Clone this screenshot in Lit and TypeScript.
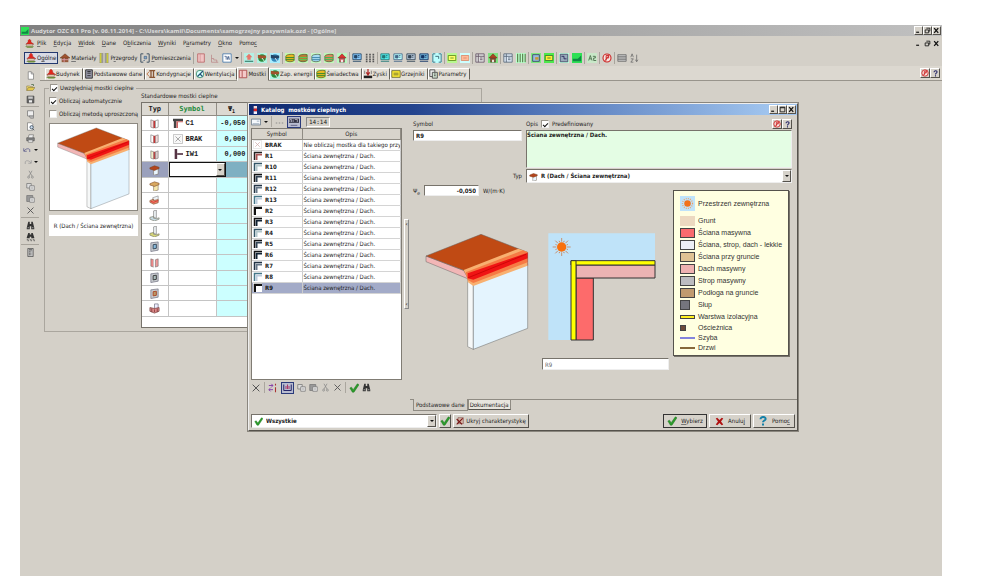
import { LitElement, html, svg, css, nothing } from "lit";
import { customElement, property } from "lit/decorators.js";
import { classMap } from "lit/directives/class-map.js";

const house = (wall: string, roof: string) => svg`
  <path d="M3 6h6v5H3z" fill="${wall}" stroke="#444" stroke-width=".6"/>
  <path d="M1 6 6 1l5 5z" fill="${roof}" stroke="#621" stroke-width=".5"/>
  <path d="M5 8h2v3H5z" fill="#fff"/>`;
const screen = (frame: string, fill: string) => svg`
  <path d="M1 1h10v7H1z" fill="${fill}" stroke="${frame}"/>
  <path d="M3 3h3v3H3zM7 3h2M7 5h2M1 10h10" fill="${frame}" stroke="${frame}"/>`;
const sheet = (frame: string, fill: string) => svg`
  <path d="M1 1h10v10H1z" fill="${fill}" stroke="${frame}"/>
  <path d="M1 4h10M4 1v10M6 6h3M6 8h3" stroke="${frame}" fill="none"/>`;
const drum = (bg: string, a: string, b: string) => svg`
  <path d="M0 0h12v12H0z" fill="${bg}"/>
  <path d="M1 4c0-2 6-3 10-2v7c-2 2-8 2-10 0z" fill="${a}" stroke="#453" stroke-width=".8"/>
  <path d="M1 5.500h10M1 8h10" stroke="${b}" stroke-width="1.200"/>`;
const plate = (frame: string, fill: string, bg: string) => svg`
  <path d="M0 0h12v12H0z" fill="${bg}"/><path d="M1.500 3h9v6h-9z" fill="${fill}" stroke="${frame}"/>
  <path d="M4 6h4" stroke="${frame}"/>`;
const globe = (a: string, b: string, bg: string) => svg`
  <path d="M0 0h12v12H0z" fill="${bg}"/><circle cx="6" cy="6" r="4.500" fill="${a}"/>
  <path d="M1 2l5 1 5 0v3L6 7 1 6z" fill="${b}"/><path d="M6 6l3 4" stroke="#fff"/>`;
const panel = (l: string, m: string, r: string) => svg`
  <path d="M2 2l3 1v8l-3-1z" fill="${l}" stroke="#666" stroke-width=".6"/>
  <path d="M5 3h2v8H5z" fill="${m}"/><path d="M7 3l3-1v8l-3 1z" fill="${r}" stroke="#666" stroke-width=".6"/>`;
const corner = (outer: string, inner: string) => svg`
  <path d="M1 12V1h11v2H3v9z" fill="${outer}"/>
  <path d="M3.500 12V3.500H12v2.500H6v6z" fill="${inner}"/>`;
const slab = (top: string, side: string) => svg`
  <path d="M5 6l5-1.500V11L6 12l-1-.5z" fill="${side}" stroke="#765" stroke-width=".6"/>
  <path d="M1 4l5-2 5 1.500V5L6 7 1 5.500z" fill="${top}" stroke="#742" stroke-width=".6"/>`;
const base = (foot: string) => svg`
  <path d="M5 1l3-1v9l-3-1z" fill="#eef3f5" stroke="#777" stroke-width=".7"/>
  <path d="M1 8l4-1v2l3 .5 3-1v1.500L6 12 1 10z" fill="${foot}" stroke="#776" stroke-width=".7"/>`;
const opening = (frame: string, fill: string) => svg`
  <path d="M2 2l8-1v9l-8 1.500z" fill="#c8ccd0" stroke="#667" stroke-width=".7"/>
  <path d="M4.500 4l3.500-.5V8l-3.500.6z" fill="${fill}" stroke="${frame}"/>`;

const ICONS: Record<string, unknown> = {
  app: svg`<path d="M6 0l2 2v2l4 3H1l3-3V2z" fill="#e0281e" stroke="#822" stroke-width=".4"/><path d="M2 7h8v2H2z" fill="#f4e0c8" stroke="#643" stroke-width=".5"/><path d="M0 9.500h12l-2 2H3z" fill="#6b8a3a"/>`,
  brick: svg`<path d="M2 6h8v5H2z" fill="#965a3c"/><path d="M0 6 6 1l6 5z" fill="#a0522d" stroke="#532" stroke-width=".5"/><path d="M2 8h8M5 6v5" stroke="#d9a"/>`,
  walls: svg`<path d="M1 0h2v12H1zM9 0h2v12H9z" fill="#d9d832" stroke="#776" stroke-width=".5"/><path d="M4.500 0v12M7.500 0v12" stroke="#777"/>`,
  room: svg`<path d="M4 1H1v10h3M8 1h3v10H8" fill="none" stroke="#456" stroke-width="1.200"/><path d="M5 4h3v3H5zM4 9h2" fill="#8ac" stroke="#357" stroke-width=".7"/>`,
  roomCyan: svg`<path d="M0 0h12v12H0z" fill="#bff"/><path d="M4 1H1v10h3M8 1h3v10H8M4 4h4v3" fill="none" stroke="#356"/>`,
  door: svg`<path d="M2 1h8v10H2z" fill="#f0c4c4" stroke="#b66"/><path d="M5 1v10" stroke="#c88" stroke-width=".7"/>`,
  chart: svg`<path d="M2 1v10h9M2 6h3v2h4v3" stroke="#b88" fill="none"/>`,
  word: svg`<path d="M1 1h10v10H1z" fill="#fff" stroke="#47a"/><path d="M3 4h2v4M6 4l1 4 1-4 1 4" stroke="#247" fill="none" stroke-width=".8"/>`,
  houseTeal: svg`<path d="M0 0h12v12H0z" fill="#b4f0e4"/><path d="M6 1l4 4H8v3H4V5H2z" fill="#e8756a"/><path d="M1 10h10" stroke="#487" stroke-width="1.500"/>`,
  globeGreen: globe("#2a8a3a", "#a0522d", "#b0f4e4"),
  globeBlue: globe("#38b", "#246", "#aef"),
  drumA: drum("#c8f8b0", "#e8b820", "#3a8a2a"), drumB: drum("#c0f8b8", "#b97b35", "#5c5"), drumC: drum("#c8f8c8", "#a8dcf4", "#48a"), drumD: drum("#c0f8b8", "#d88a5a", "#3b5"),
  houseGreen: svg`<path d="M0 0h12v12H0z" fill="#b8f8c0"/>${house("#c66", "#d33")}`,
  houseBrown: svg`<path d="M0 0h12v12H0z" fill="#7fe07f"/>${house("#853", "#a42")}`,
  scrBlue: screen("#246", "#8cf"), scrTeal: screen("#277", "#5ee"), scrCyan: screen("#468", "#bff"), scrGrey: screen("#345", "#bcd"), scrDark: screen("#136", "#7bd"),
  bars: svg`<path d="M2 1v10M6 1v10M10 1v10" stroke="#555" stroke-width="2" stroke-dasharray="2 .8"/>`,
  plateY: plate("#5a8a1a", "#ff6", "#b8f890"), plateO: plate("#d88a6a", "#fb9", "#cff"), plateG: plate("#373", "#fe3", "#4ce84c"),
  table: sheet("#656", "#ddd"), tableBlue: sheet("#567", "#dde8f4"), tableGreen: svg`<path d="M0 0h12v12H0z" fill="#7fe87f"/><path d="M2 2h8v8H2z" fill="#9bd" stroke="#346"/><path d="M5 5h4v3H5z" fill="#c93"/>`,
  stripes: svg`<path d="M0 0h12v12H0z" fill="#bfc"/><path d="M2 1v10M5 1v10M8 1v10M11 1v10" stroke="#574" stroke-width="1.300"/>`,
  tableBrown: svg`<path d="M0 0h12v12H0z" fill="#bfd"/><path d="M1.500 1.500h9v9h-9z" fill="#9ab" stroke="#446"/><path d="M3 4h3v3h3" stroke="#225" fill="none"/>`,
  green: svg`<path d="M0 0h12v12H0z" fill="#2ee055"/><path d="M1 10h10V3L7 7H1z" fill="#184"/>`,
  letterA: svg`<path d="M0 0h12v12H0z" fill="#c8e8c8"/><path d="M2 9l2-6 2 6M3 7h2M7 4h3v2H8v3h3" fill="none" stroke="#464"/>`,
  info: svg`<circle cx="6" cy="6" r="4.800" fill="#f6e4e0" stroke="#c22" stroke-width="1.300"/><path d="M5 9V3h3v3H5M9 2 3 10" stroke="#c22" fill="none" stroke-width="1.100"/>`,
  grid: svg`<path d="M1 2h10v8H1zM1 4h10M1 6h10M1 8h10" fill="#ccc" stroke="#666" stroke-width=".9"/>`,
  sort: svg`<path d="M1 5l1.500-4L4 5M1 7h3l-3 4h3M8 2v8M6.500 8 8 10.500 9.500 8" fill="none" stroke="#666" stroke-width=".9"/>`,
  floors: svg`<path d="M4 2h7M4 10h7M6 2v8M9 2v8" stroke="#853" stroke-width="1.600"/><path d="M4 3 1 6l3 3" fill="none" stroke="#b63"/>`,
  fan: svg`<circle cx="6" cy="6" r="4.500" fill="#dff" stroke="#386"/><path d="M6 6l4-4M6 6 3 9M6 6l3 3" stroke="#257" stroke-width="1.400"/>`,
  cabinet: svg`<path d="M2 1h8v10H2z" fill="#99a" stroke="#222"/><path d="M4 3h4M4 5h4M4 8h4" stroke="#222"/>`,
  gain: svg`<path d="M1 8h10v3H1z" fill="#222"/><path d="M6 0v8M4 4l2 3 2-3" stroke="#a22" fill="none" stroke-width="1.400"/><path d="M2 2v4M10 2v4" stroke="#777"/>`,
  radiator: svg`<path d="M1 2h10v8H1z" fill="#fe3" stroke="#663"/><path d="M3 5h6M3 7h6" stroke="#663"/>`,
  params: svg`<path d="M1 1h6v8H1z" fill="#eee" stroke="#444"/><path d="M4 4h6v7H4z" fill="#cdc" stroke="#444"/><path d="M6 6h2M6 8h2" stroke="#444"/>`,
  bridge: svg`<path d="M1.500 1.500h9v9h-9z" fill="#f4caca" stroke="#a44"/><path d="M5 2v8" stroke="#a44"/>`,
  blank: svg`<path d="M3 1h4l3 3v7H3z" fill="#fff" stroke="#666" stroke-width=".8"/><path d="M7 1v3h3" fill="none" stroke="#666" stroke-width=".8"/>`,
  open: svg`<path d="M1 10V4h4l1 1h3v2" fill="#f4e27a" stroke="#874" stroke-width=".8"/><path d="M1 10l2-4h9l-3 4z" fill="#e4c84a" stroke="#874" stroke-width=".8"/><path d="M7 2h3v2" stroke="#464" fill="none"/>`,
  save: svg`<path d="M1.500 1.500h9v9h-9z" fill="#666" stroke="#444"/><path d="M3 2h6v3H3z" fill="#ccc"/><path d="M4 7h4v3H4z" fill="#eee"/>`,
  print: svg`<path d="M1 5h10v4H1z" fill="#888" stroke="#444" stroke-width=".8"/><path d="M4 1h6L9 5H3zM3 8h6v3H3z" fill="#eee" stroke="#555" stroke-width=".7"/>`,
  scroll: svg`<path d="M2 1h8v7H2z" fill="#eee" stroke="#777"/><path d="M4 8h6v3H6z" fill="#bbb" stroke="#666" stroke-width=".7"/>`,
  preview: svg`<path d="M2 1h5l2 2v8H2z" fill="#fff" stroke="#666" stroke-width=".8"/><circle cx="7.500" cy="7" r="2.200" fill="#cde" stroke="#345"/><path d="M9 9l2 2" stroke="#345"/>`,
  undo: svg`<path d="M1 3v4h4M1.500 6.500C4 3 8 3 9 5v3" fill="none" stroke="#558"/>`,
  redo: svg`<path d="M11 3v4H7M10.500 6.500C8 3 4 3 3 5v3" fill="none" stroke="#999"/>`,
  cut: svg`<path d="M4 1l4 7M8 1 4 8" stroke="#888"/><circle cx="3.500" cy="9.500" r="1.300" fill="none" stroke="#888"/><circle cx="8.500" cy="9.500" r="1.300" fill="none" stroke="#888"/>`,
  copy: svg`<path d="M1 2h6v6H1z" fill="#ddd" stroke="#777"/><path d="M5 5h6v6H5z" fill="#eee" stroke="#777"/><path d="M6.500 7h3M6.500 9h3" stroke="#888" stroke-width=".7"/>`,
  paste: svg`<path d="M1 2h8v8H1z" fill="#999" stroke="#777"/><path d="M5 5h6v6H5z" fill="#eee" stroke="#777"/><path d="M6.500 7h3M6.500 9h3" stroke="#888" stroke-width=".7"/>`,
  del: svg`<path d="M2 2l8 8M10 2 2 10" stroke="#555" stroke-width="1.200"/>`,
  find: svg`<path d="M3 1h2v3h2V1h2l2 8v2H7V7H5v4H1V9z" fill="#333"/><path d="M2 9h2M8 9h2" stroke="#bbb"/>`,
  findNext: svg`<path d="M3 0h2v2h2V0h2l2 6v1H7V5H5v2H1V6z" fill="#333"/><path d="M1 9h2v2M5 9h2v2M9 9h2v2" stroke="#444" fill="none"/>`,
  calc: svg`<path d="M2.500.5h7v11h-7z" fill="#ccc" stroke="#444"/><path d="M4 2.500h4M4 5h1M6 5h1M4 7h1M6 7h1M4 9h1M6 9h1" stroke="#333" stroke-width="1.200"/>`,
  wallA: panel("#f3d9d9", "#c33", "#fff"), wallB: panel("#fff", "#c33", "#f3d9d9"), wallC: panel("#eec", "#b44", "#dcc"),
  roofA: slab("#b4441c", "#eaf6ff"), roofB: slab("#d8a860", "#f6e8b0"),
  floor: svg`<path d="M4 3l6-2v6l-5 2z" fill="#eef4f8" stroke="#777" stroke-width=".6"/><path d="M1 6l4-1.500V6l5-1v3.500L5 10 1 8z" fill="#e8866a" stroke="#853" stroke-width=".7"/><path d="M2 7l3 1 5-2" stroke="#d33" fill="none"/>`,
  baseA: base("#c8dce4"), baseB: base("#d8d878"), winA: opening("#345", "#8bd"), winB: panel("#e88", "#fff", "#e99"), winC: opening("#333", "#abb"), winD: opening("#a42", "#b96"),
  balcony: svg`<path d="M6 1h4v7H6z" fill="#eef" stroke="#667" stroke-width=".7"/><path d="M1 5l5 1 5-1v4L6 11 1 9z" fill="#d88" stroke="#744" stroke-width=".8"/><path d="M3 6v4M6 7v3M9 6v4" stroke="#733" stroke-width=".8"/>`,
  c1: svg`<path d="M0 1h12v3H4v8H1V4H0z" fill="#444"/><path d="M4 4h8v1H6v7H4z" fill="#c66"/>`,
  iw: svg`<path d="M2 0h3v12H2z" fill="#534"/><path d="M5 5h7v2H5z" fill="#534"/>`,
  none: svg`<path d="M.5.5h11v11H.5z" fill="#f8f8f8" stroke="#bbb"/><path d="M3 3l6 6M9 3 3 9" stroke="#999"/>`,
  noneRed: svg`<path d="M.5.5h11v11H.5z" fill="#fff" stroke="#ddd"/><path d="M3 3l6 6M9 3 3 9" stroke="#caa"/>`,
  k1: corner("#222", "#a55"), k2: corner("#356", "#b4c8cc"), k3: corner("#111", "#345"), k4: corner("#234", "#678"), k5: corner("#478", "#bcd"), k7: corner("#111", "#123"),
  k6: svg`<path d="M1 12V1h11v3H4v8z" fill="#111"/>`,
  check: svg`<path d="M1 6l2-1 2 3 5-7 2 1-6 9H4z" fill="#2c9c2c" stroke="#176b17" stroke-width=".5"/>`,
  cross: svg`<path d="M1 2l2-1 3 3 3-3 2 1-3 4 3 4-2 1-3-3-3 3-2-1 3-4z" fill="#b01010"/>`,
  hide: svg`<path d="M3 1h8v9H3z" fill="#d4b4a4" stroke="#744" stroke-width=".8"/><path d="M1 3l8 8M10 2 1 11" stroke="#711" stroke-width="1.600"/>`,
  swap: svg`<path d="M1 3h5M4 1l2 2-2 2M6 8H1M3 6 1 8l2 2" stroke="#84a" fill="none" stroke-width="1.200"/><path d="M9 1v2M9 5v6" stroke="#a33" stroke-width="1.300"/>`,
  dock: svg`<path d="M1 2v8h10V2" fill="none" stroke="#226" stroke-width="1.300"/><path d="M4 4v4M8 4v4M6 2v6" stroke="#a36" stroke-width="1.300"/>`,
  picture: svg`<path d="M.5 2.500h11v7H.5z" fill="#f4f8fc" stroke="#678"/><path d="M2 8h8M7 5h3" stroke="#9ab"/>`,
  auto: svg`<path d="M0 2h12v5H0z" fill="#334"/><path d="M1 6V3h2v3M5 3v3M7 3h3v3" stroke="#ccd" stroke-width=".8" fill="none"/><path d="M2 10h8" stroke="#557"/>`,
  dots: svg`<path d="M1 8h2M5 8h2M9 8h2" stroke="#777"/>`,
  flag: svg`<path d="M4 0h5v4H4z" fill="#f4dada"/><path d="M4 4h5v4H4z" fill="#d22"/><path d="M4 8h5v4H4z" fill="#eef"/>`,
  sun: svg`<path d="M0 0h12v12H0z" fill="#bfe3fa"/><circle cx="6" cy="6" r="2.600" fill="#f2731c"/><circle cx="6" cy="6" r="4" fill="none" stroke="#f0a060" stroke-dasharray=".7 1"/>`,
  min: svg`<path d="M2 9h5" stroke="#111" stroke-width="2"/>`,
  restore: svg`<path d="M4 2h6v5H8M2 5h6v5H2z" fill="none" stroke="#111" stroke-width="1.400"/>`,
  max: svg`<path d="M2 2h8v8H2zM2 3h8" fill="none" stroke="#111" stroke-width="1.400"/>`,
  close: svg`<path d="M2 2l7 8M9 2 2 10" stroke="#111" stroke-width="2.200"/>`,
  help: svg`<path d="M3.500 4c0-4 6-3.500 5 0-.5 1.500-2.500 1.500-2.500 3.500M6 9v2" fill="none" stroke="#226" stroke-width="1.800"/>`,
  helpBlue: svg`<path d="M3 4c0-4 7-3.500 6 0-.5 1.500-3 1.500-3 3.500M6 9v2.500" fill="none" stroke="#1480a8" stroke-width="2.400"/>`,
};

const shared = css`
  :host { box-sizing: border-box; }
  *, *::before, *::after { box-sizing: border-box; }
  button, input, select, textarea { font: inherit; color: inherit; margin: 0; padding: 0; border: 0; border-radius: 0; background: none; }
  button { display: inline-flex; align-items: center; justify-content: center; white-space: nowrap; }
  u { text-underline-offset: 1px; text-decoration-thickness: 1px; text-decoration-color: #777; }
  .tick { appearance: none; flex: none; width: 8px; height: 8px; background: #fff; border: 1px solid #9a968e; border-right-color: #eee; border-bottom-color: #eee; display: grid; place-items: center; }
  .tick:checked::after { content: ""; width: 5px; height: 3px; border: solid #111; border-width: 0 0 1px 1px; transform: rotate(-45deg); }
  .raised { background: #d6d2ca; border: 1px solid; border-color: #fff #55524c #55524c #fff; }
  .arrow { border: solid transparent; border-width: 2px 2px 0; border-top-color: #111; width: 0; height: 0; }
`;

@customElement("ui-icon")
class UiIcon extends LitElement {
  @property() name = "";
  @property({ type: Number }) size = 10;
  static styles = css`
    :host { display: inline-flex; flex: none; }
    svg { display: block; }
  `;
  render() {
    return html`<svg width=${this.size} height=${this.size} viewBox="0 0 12 12" aria-hidden="true">${ICONS[this.name]}</svg>`;
  }
}

@customElement("roof-joint")
class RoofJoint extends LitElement {
  static styles = css`
    :host { display: block; }
    svg { display: block; width: 100%; }
  `;
  render() {
    return html`<svg viewBox="42 54 312 354" role="img" aria-label="Dach / Ściana zewnętrzna">
      <g stroke="#666" stroke-width="1.500" stroke-linejoin="round">
        <path d="M170 188l17 10v205l-17-8z" fill="#f6f8f8"/>
        <path d="M187 205 350 146V340L187 403z" fill="#e4f4fe"/>
        <path d="M45 123l125 48v20L45 140z" fill="#f2b6b6"/>
        <path d="M45 123 210 58l140 54-180 76-12-22z" fill="#c04a14"/>
      </g>
      <path d="M158 165 322 101l28 11v40L187 213l-17-12v-12z" fill="#f8b070"/>
      <path d="M164 172 336 106l14 6v30L187 204l-17-9z" fill="#f67a44"/>
      <path d="M170 175 350 113v17L187 194l-17-4z" fill="#f01414"/>
      <path d="M172 188 345 118" stroke="#b00" stroke-width="2"/>
      <path d="M350 112v40" stroke="#844" stroke-width="1.500"/>
    </svg>`;
  }
}

@customElement("section-drawing")
class SectionDrawing extends LitElement {
  static styles = css`
    :host { display: block; }
    svg { display: block; width: 100%; }
  `;
  render() {
    const rays = Array.from({ length: 16 }, (_, i) => i * 22.5);
    return html`<svg viewBox="413 56 324 324" role="img" aria-label="R9">
      <path d="M414 57h320v82H482v238h-68z" fill="#bfe3f9"/>
      ${rays.map((a, i) => svg`<path d="M454 ${i % 2 ? 78 : 71}V82" stroke="#c86a30" stroke-width="2" transform="rotate(${a} 454 98)"/>`)}
      <circle cx="454" cy="98" r="14" fill="#f8700c"/>
      <g stroke="#333" stroke-width="3">
        <path d="M497 191h52v186h-52z" fill="#fd6b6b"/>
        <path d="M497 152h237v39H497z" fill="#ebb3b3"/>
        <path d="M482 139h252v13H482z" fill="#ff0"/>
        <path d="M482 139h15v238h-15z" fill="#ff0"/>
      </g>
    </svg>`;
  }
}

const LEGEND: [string, string, string][] = [
  ["soil", "#ecd9c0", "Grunt"], ["box", "#f96a6e", "Ściana masywna"], ["box", "#eceef6", "Ściana, strop, dach - lekkie"],
  ["box", "#dfc294", "Ściana przy gruncie"], ["box", "#efb2b2", "Dach masywny"], ["box", "#bcbcc0", "Strop masywny"],
  ["box", "#c09a70", "Podłoga na gruncie"], ["post", "#75757d", "Słup"], ["bar", "#fff01e", "Warstwa izolacyjna"],
  ["stud", "#6d4a3a", "Ościeżnica"], ["pane", "#8383dc", "Szyba"], ["pane", "#86683a", "Drzwi"],
];

const RECORDS: [string, string][] = [
  ["BRAK", "noneRed"], ["R1", "k1"], ["R10", "k2"], ["R11", "k3"], ["R12", "k4"], ["R13", "k5"], ["R2", "k6"],
  ["R3", "k7"], ["R4", "k2"], ["R5", "k3"], ["R6", "k7"], ["R7", "k4"], ["R8", "k5"], ["R9", "k6"],
];

@customElement("bridge-catalog")
class BridgeCatalog extends LitElement {
  static styles = [shared, css`
    :host { display: flex; flex-direction: column; background: #d4d0c8; border: 1px solid; border-color: #eee #55524c #55524c #eee; outline: 1px solid #8a867e; }
    .title { display: flex; align-items: center; gap: 2px; height: 11px; padding: 0 1px 0 2px; color: #fff; font-weight: bold; white-space: pre; background: linear-gradient(90deg, #0f2a70 0%, #24448e 30%, #4c70b4 50%, #a0c4ee 95%); }
    .title h2 { font: inherit; margin: 0; flex: 1; }
    .wins { display: flex; }
    .win { width: 9px; height: 9px; }
    .body { display: grid; grid-template-columns: 151px 5px 1fr; column-gap: 2px; flex: 1; padding-left: 2px; }
    .left { display: flex; flex-direction: column; padding-bottom: 17px; }
    .bar { display: flex; align-items: center; gap: 3px; height: 13px; }
    .bar .sep { width: 1px; height: 11px; background: #aaa69e; }
    .press { border: 1px solid #2a3a7a; background: #b8bcd0; padding: 0 1px; height: 12px; }
    .count { border: 1px solid; border-color: #888 #fff #fff #888; padding: 0 2px; height: 10px; line-height: 8px; margin-left: 2px; font-family: "DejaVu Sans Mono", monospace; }
    .list { flex: 1; background: #fff; border: 1px solid #807c74; overflow: hidden; }
    table { width: 100%; border-collapse: collapse; table-layout: fixed; }
    .sym { width: 50px; }
    th { height: 10px; padding: 0; background: #d8d4cc; font-weight: normal; border-right: 1px solid #908c84; border-bottom: 1px solid #908c84; }
    td { height: 11px; padding: 0 0 0 1px; white-space: nowrap; overflow: hidden; border-right: 1px solid #ccc; border-bottom: 1px solid #d4d4d4; line-height: 8px; }
    .cell { display: flex; align-items: center; gap: 3px; font-weight: bold; }
    .cell ui-icon { background: #fff; }
    .on td { background: #a3abc8; }
    .lower { height: 15px; }
    .split { align-self: center; height: 90px; border: 1px solid; border-color: #fff #888 #888 #fff; display: flex; flex-direction: column; justify-content: space-between; align-items: center; font-weight: bold; padding: 0; }
    .right { display: flex; flex-direction: column; padding: 3px 0 0 2px; }
    .form { display: grid; grid-template-columns: 109px minmax(0, 1fr); column-gap: 4px; padding-right: 5px; grid-template-rows: 12px 39px 14px; }
    .top { display: flex; align-items: center; gap: 3px; }
    .grow { flex: 1; }
    .tools { display: flex; }
    .tools button { width: 10px; height: 10px; }
    .field { background: #fff; border: 1px solid; border-color: #77736b #eee #eee #77736b; font-weight: bold; padding: 0 2px; height: 11px; width: 100%; min-width: 0; }
    textarea.field { height: 38px; padding: 0; background: #e4fde4; resize: none; display: block; line-height: 8px; }
    .typ { justify-self: end; align-self: center; }
    .combo { display: grid; grid-template-columns: auto 1fr 9px; align-items: center; gap: 3px; background: #fff; border: 1px solid; border-color: #77736b #eee #eee #77736b; height: 14px; padding-left: 2px; }
    .combo select { appearance: none; width: 100%; font-weight: bold; height: 10px; outline: 0; }
    .combo .raised { height: 100%; display: grid; place-items: center; }
    .detail { display: flex; align-items: flex-start; padding-right: 8px; }
    .work { flex: 1; }
    .psi { display: flex; align-items: center; gap: 4px; padding-top: 2px; }
    .psi .field { width: 55px; text-align: right; }
    .psi sub { font-size: 5px; line-height: 0; }
    .views { display: flex; gap: 19px; padding: 37px 0 0 12px; }
    .iso { width: 104px; }
    .plan { width: 108px; }
    .name { margin: 7px 0 0 129px; width: 127px; height: 12px; display: block; font-weight: normal; color: #666; }
    .legend { margin: 7px 0 0; padding: 4px 5px 2px 6px; list-style: none; width: 116px; background: #ffffe1; border: 1px solid #55524c; box-shadow: 1px 1px 0 #77736b; font-family: "Liberation Sans", Arial, sans-serif; font-size: 7px; line-height: 10px; color: #333; }
    .legend li { display: grid; grid-template-columns: 15px 1fr; gap: 3px; align-items: center; height: 12px; white-space: nowrap; }
    .legend li.first { height: 17px; margin-bottom: 3px; }
    .legend li.thin { height: 10px; }
    .sw { height: 10px; border: 1px solid #444; }
    .sw.soil { border: 0; }
    .sw.post { width: 10px; }
    .sw.bar { height: 4px; }
    .sw.stud { width: 6px; height: 6px; }
    .sw.pane { height: 2px; border: 0; }
    .tabs { display: flex; margin-top: auto; height: 13px; }
    .tabs::before, .tabs::after { content: ""; border-top: 1px solid #8f8b83; width: 3px; }
    .tabs::before { margin-left: -3px; }
    .tabs::after { flex: 1; }
    .tab { border: 1px solid #8f8b83; border-width: 0 1px 1px 1px; padding: 0 2px; height: 12px; }
    .tab.off { border-top-width: 1px; background: #e8e5de; height: 11px; border-bottom-color: #55524c; padding: 0 1px; }
    .foot { display: flex; gap: 2px; padding: 2px; height: 18px; }
    .foot button { gap: 4px; }
    .foot .combo { width: 186px; }
    .foot .ok { width: 12px; }
    .foot .hide { width: 76px; gap: 2px; }
    .foot .act { width: 42px; }
    .foot .main { width: 44px; outline: 1px solid #333; outline-offset: -1px; }
  `];
  render() {
    const arrow = html`<span class="raised"><span class="arrow"></span></span>`;
    return html`
      <header class="title"><ui-icon name="flag" size="8"></ui-icon><h2>Katalog  mostków cieplnych</h2>
        <span class="wins">${["min", "max", "close"].map(n => html`<button class="win raised" aria-label=${n}><ui-icon name=${n} size="7"></ui-icon></button>`)}</span>
      </header>
      <div class="body">
        <section class="left">
          <div class="bar">
            <button aria-label="Widok"><ui-icon name="picture"></ui-icon></button><span class="arrow"></span><span class="sep"></span>
            <button aria-label="Więcej"><ui-icon name="dots" size="9"></ui-icon></button>
            <button class="press" aria-label="Auto"><ui-icon name="auto"></ui-icon></button>
            <output class="count">14:14</output>
          </div>
          <div class="list"><table>
            <thead><tr><th class="sym">Symbol</th><th>Opis</th></tr></thead>
            <tbody>${RECORDS.map(([id, icon]) => html`<tr class=${classMap({ on: id === "R9" })}>
              <td><span class="cell"><ui-icon name=${icon} size="9"></ui-icon>${id}</span></td>
              <td>${id === "BRAK" ? "Nie obliczaj mostka dla takiego przypa" : "Ściana zewnętrzna / Dach."}</td></tr>`)}</tbody>
          </table></div>
          <div class="bar lower">
            <button aria-label="Usuń"><ui-icon name="del"></ui-icon></button><span class="sep"></span>
            <button aria-label="Zamień"><ui-icon name="swap"></ui-icon></button>
            <button class="press" aria-label="Dokuj"><ui-icon name="dock" size="9"></ui-icon></button>
            ${["copy", "paste", "cut", "del"].map(n => html`<button aria-label=${n}><ui-icon name=${n} size="9"></ui-icon></button>`)}
            <span class="sep"></span>
            <button aria-label="Zatwierdź"><ui-icon name="check"></ui-icon></button><button aria-label="Szukaj"><ui-icon name="find" size="9"></ui-icon></button>
          </div>
        </section>
        <button class="split" aria-label="Zwiń"><span>‹</span><span>‹</span></button>
        <section class="right">
          <div class="form">
            <label class="top" for="sym">Symbol</label>
            <div class="top"><label for="desc">Opis</label><input class="tick" type="checkbox" id="pre" checked><label for="pre">Predefiniowany</label><span class="grow"></span>
              <span class="tools"><button class="raised" aria-label="Info"><ui-icon name="info" size="8"></ui-icon></button><button class="raised" aria-label="Pomoc"><ui-icon name="help" size="7"></ui-icon></button></span></div>
            <input class="field" id="sym" value="R9">
            <textarea class="field" id="desc" .value=${"Ściana zewnętrzna / Dach."}></textarea>
            <label class="typ" for="typ">Typ</label>
            <div class="combo"><ui-icon name="roofA" size="9"></ui-icon><select id="typ"><option>R (Dach / Ściana zewnętrzna)</option></select>${arrow}</div>
          </div>
          <div class="detail">
            <div class="work">
              <div class="psi"><label for="psi">Ψ<sub>e</sub></label><input class="field" id="psi" value="-0,050"><span>W/(m·K)</span></div>
              <div class="views"><roof-joint class="iso"></roof-joint><section-drawing class="plan"></section-drawing></div>
              <input class="field name" value="R9" aria-label="Nazwa">
            </div>
            <ul class="legend">
              <li class="first"><ui-icon name="sun" size="15"></ui-icon>Przestrzeń zewnętrzna</li>
              ${LEGEND.map(([kind, color, text]) => html`<li class=${classMap({ thin: kind === "stud" || kind === "pane" })}><span class="sw ${kind}" style="background:${color}"></span>${text}</li>`)}
            </ul>
          </div>
          <div class="tabs"><button class="tab">Podstawowe dane</button><button class="tab off">Dokumentacja</button></div>
        </section>
      </div>
      <footer class="foot">
        <div class="combo"><ui-icon name="check" size="9"></ui-icon><select aria-label="Filtr"><option>Wszystkie</option></select>${arrow}</div>
        <button class="ok raised" aria-label="Filtruj"><ui-icon name="check"></ui-icon></button>
        <button class="hide raised"><ui-icon name="hide" size="8"></ui-icon>Ukryj charakterystykę</button>
        <span class="grow"></span>
        <button class="main raised"><ui-icon name="check"></ui-icon><span><u>W</u>ybierz</span></button>
        <button class="act raised"><ui-icon name="cross" size="9"></ui-icon><span>Anulu<u>j</u></span></button>
        <button class="act raised"><ui-icon name="helpBlue"></ui-icon><span>Pomo<u>c</u></span></button>
      </footer>`;
  }
}

const MENU = ["_Plik", "_Edycja", "_Widok", "_Dane", "O_bliczenia", "_Wyniki", "P_arametry", "_Okno", "Pomo_c"];
const TOOL_GROUPS = [
  ["houseTeal", "globeGreen", "globeBlue"], ["drumA", "drumB", "drumC", "drumD", "houseGreen"], ["scrBlue", "bars"],
  ["scrTeal", "scrCyan", "scrGrey", "scrDark", "roomCyan"], ["plateY", "plateO"], ["table", "houseBrown"], ["tableBlue", "stripes"],
  ["tableGreen", "plateG"], ["tableBrown", "green"], ["letterA"], ["info"], ["grid", "sort"],
];
const TABS: [string, string][] = [
  ["app", "Budynek"], ["cabinet", "Podstawowe dane"], ["floors", "Kondygnacje"], ["fan", "Wentylacja"], ["bridge", "Mostki"],
  ["globeGreen", "Zap. energii"], ["drumA", "Świadectwa"], ["gain", "Zyski"], ["radiator", "Grzejniki"], ["params", "Parametry"],
];
const SIDE = [["blank", "open", "save"], ["scroll", "preview", "print", "undo", "redo", "cut", "copy", "paste", "del"], ["find", "findNext"], ["calc"]];
const ROWS: { icon: string; mark?: string; name?: string; psi?: string }[] = [
  { icon: "wallA", mark: "c1", name: "C1", psi: "-0,050" }, { icon: "wallB", mark: "none", name: "BRAK", psi: "0,000" },
  { icon: "wallC", mark: "iw", name: "IW1", psi: "0,000" }, { icon: "roofA" }, { icon: "roofB" }, { icon: "floor" }, { icon: "baseA" },
  { icon: "baseB" }, { icon: "winA" }, { icon: "winB" }, { icon: "winC" }, { icon: "winD" }, { icon: "balcony" },
];

@customElement("app-root")
class AppRoot extends LitElement {
  static styles = [shared, css`
    :host { display: block; min-height: 100vh; padding: 25px 58px 0 20px; background: #fff; color: #1c1c1c; font: 6px/8px "DejaVu Sans Condensed", "DejaVu Sans", Tahoma, sans-serif; position: relative; }
    .window { background: #d4d0c8; min-height: calc(100vh - 25px); }
    .title { display: flex; align-items: center; height: 11px; gap: 2px; padding: 0 1px; background: linear-gradient(90deg, #808080, #c0c0c0); color: #dcdcdc; }
    .title h1 { flex: 1; font: bold 6px/8px "Open Sans", "Noto Sans", sans-serif; margin: 0; white-space: nowrap; }
    .win { width: 9px; height: 9px; }
    .menu { display: flex; align-items: center; height: 14px; gap: 3px; padding: 0 1px 0 5px; }
    .items { display: flex; gap: 7px; }
    .grow { flex: 1; }
    .mdi, .wins { display: flex; } .mdi button { width: 9px; }
    .bar { display: flex; align-items: center; height: 16px; padding-left: 4px; }
    .mode { gap: 1px; height: 12px; padding: 0 1px; margin-right: 1px; }
    .mode.on { border: 1px solid #24386e; background: #d8dae4; }
    .tool { width: 13px; height: 12px; }
    .word { width: 20px; gap: 3px; }
    .sep { width: 1px; height: 12px; background: #a8a49c; margin-right: 1px; }
    .main { display: grid; grid-template-columns: 20px minmax(0, 1fr); }
    .side { display: flex; flex-direction: column; align-items: center; padding-top: 3px; }
    .side button { width: 16px; height: 12px; gap: 2px; }
    .side hr { border: 0; border-top: 1px solid #a8a49c; width: 18px; margin: 1px 0; }
    .tabs { display: flex; align-items: flex-end; height: 15px; padding: 0 2px 0 5px; background: #dcd8d0; border-bottom: 1px solid #98948c; }
    .tab { height: 12px; padding: 0 2px 0 0; background: #e4e0d8; border: 1px solid; border-color: #fff #66625a transparent #fff; }
    .tab.on { height: 14px; background: #d4d0c8; margin-bottom: -1px; }
    .tabs .raised { width: 10px; height: 10px; margin-bottom: 2px; }
    .group { width: 438px; margin: 3px 0 0 4px; border: 1px solid #aaa69e; padding: 0 3px 3px 4px; min-width: 0; }
    .group legend { padding: 0 2px 0 1px; }
    .tickrow { display: flex; align-items: center; gap: 2px; height: 8px; white-space: nowrap; }
    .cols { display: grid; grid-template-columns: 89px minmax(0, 1fr); gap: 3px; }
    .options { display: flex; flex-direction: column; gap: 5px; padding-top: 5px; }
    .picture { background: #fff; border: 1px solid #8c8880; padding: 3px 7px 3px 7px; height: 88px; }
    .caption { background: #fff; height: 21px; display: grid; place-items: center; margin-top: -1px; white-space: nowrap; }
    .sheet h3 { font: inherit; margin: 0; padding: 0 0 2px; height: 10px; }
    .box { background: #fff; border: 1px solid #77736b; border-right: 0; height: 226px; }
    table { border-collapse: collapse; table-layout: fixed; width: 100%; height: 214px; }
    .c1 { width: 26px; } .c2 { width: 48px; } .c3 { width: 31px; }
    th { background: #dcd9d2; border-right: 1px solid #908c84; border-bottom: 1px solid #908c84; padding: 0; font: bold 7px/12px "DejaVu Sans Mono", monospace; }
    th.green { color: #1c8a3a; }
    th sub { font-size: 5px; line-height: 0; }
    td { padding: 0; border-right: 1px solid #c4c4c4; border-bottom: 1px solid #c4c4c4; font: bold 7px/10px "Liberation Mono", monospace; position: relative; }
    td.ico ui-icon { display: flex; justify-content: center; }
    td.psi { background: #ccffff; text-align: right; padding-right: 1px; }
    .mark { display: flex; align-items: center; gap: 3px; padding-left: 4px; }
    tr.on td.ico { background: #9aa0bc; } tr.on td.psi { background: #7eb0c2; }
    .picker { position: absolute; z-index: 1; left: 0; top: 0; width: 57px; height: 15px; border: 1px solid #111; background: #fff; display: grid; grid-template-columns: 1fr 9px; }
    .picker select { appearance: none; }
    .picker .raised { display: grid; place-items: center; }
    .dialog { position: absolute; left: 248px; top: 103px; width: 550px; height: 328px; z-index: 2; }
  `];
  private label(text: string) {
    const [a, b] = text.split("_");
    return html`<span>${a}<u>${b[0]}</u>${b.slice(1)}</span>`;
  }
  render() {
    const icon = (n: string, s = 10) => html`<ui-icon name=${n} .size=${s}></ui-icon>`;
    const mode = (n: string, t: string, on = false) => html`<button class=${classMap({ mode: true, on })}>${icon(n)}${this.label(t)}</button>`;
    return html`
      <div class="window">
        <header class="title">${icon("green", 8)}<h1>Audytor OZC 6.1 Pro [v. 06.11.2014] - C:\\Users\\kamil\\Documents\\samogrzejny pasywniak.ozd - [Ogólne]</h1>
          <span class="wins">${["min", "restore", "close"].map(n => html`<button class="win raised" aria-label=${n}>${icon(n, 7)}</button>`)}</span></header>
        <nav class="menu">${icon("app", 9)}<span class="items">${MENU.map(m => html`<button>${this.label(m)}</button>`)}</span><span class="grow"></span>
          <span class="mdi">${["min", "restore", "close"].map(n => html`<button aria-label=${n}>${icon(n, 7)}</button>`)}</span></nav>
        <div class="bar">
          ${mode("app", "O_gólne", true)}${mode("brick", "_Materiały")}${mode("walls", "P_rzegrody")}${mode("room", "_Pomieszczenia")}
          <span class="sep"></span>
          <button class="tool" aria-label="Drzwi">${icon("door")}</button><button class="tool" aria-label="Wykres">${icon("chart", 9)}</button>
          <button class="tool word" aria-label="Word">${icon("word")}<span class="arrow"></span></button>
          ${TOOL_GROUPS.map(g => html`<span class="sep"></span>${g.map(n => html`<button class="tool" aria-label=${n}>${icon(n)}</button>`)}`)}
        </div>
        <div class="main">
          <nav class="side">${SIDE.map((g, i) => html`${i ? html`<hr>` : nothing}${g.map(n => html`<button aria-label=${n}>${icon(n, 9)}${n === "undo" || n === "redo" ? html`<span class="arrow"></span>` : nothing}</button>`)}`)}</nav>
          <div>
            <nav class="tabs">${TABS.map(([n, t]) => html`<button class=${classMap({ tab: true, on: t === "Mostki" })}>${icon(n)}${t}</button>`)}
              <span class="grow"></span><button class="raised" aria-label="Info">${icon("info", 8)}</button><button class="raised" aria-label="Pomoc">${icon("help", 7)}</button></nav>
            <fieldset class="group">
              <legend><label class="tickrow"><input class="tick" type="checkbox" checked>Uwzględniaj mostki cieplne</label></legend>
              <div class="cols">
                <div class="options">
                  <label class="tickrow"><input class="tick" type="checkbox" checked>Obliczaj automatycznie</label>
                  <label class="tickrow"><input class="tick" type="checkbox">Obliczaj metodą uproszczoną</label>
                  <div class="picture"><roof-joint></roof-joint></div>
                  <div class="caption">R (Dach / Ściana zewnętrzna)</div>
                </div>
                <div class="sheet"><h3>Standardowe mostki cieplne</h3>
                  <div class="box"><table>
                    <thead><tr><th class="c1">Typ</th><th class="c2 green">Symbol</th><th class="c3">Ψ<sub>1</sub></th><th></th></tr></thead>
                    <tbody>${ROWS.map((r, i) => html`<tr class=${classMap({ on: i === 3 })}>
                      <td class="ico">${icon(r.icon, 11)}</td>
                      <td>${r.mark ? html`<span class="mark">${icon(r.mark)}${r.name}</span>` : nothing}${i === 3 ? html`<span class="picker"><select aria-label="Symbol"><option></option></select><span class="raised"><span class="arrow"></span></span></span>` : nothing}</td>
                      <td class="psi">${r.psi ?? ""}</td><td></td></tr>`)}</tbody>
                  </table></div>
                </div>
              </div>
            </fieldset>
          </div>
        </div>
      </div>
      <bridge-catalog class="dialog" role="dialog" aria-label="Katalog mostków cieplnych"></bridge-catalog>`;
  }
}
